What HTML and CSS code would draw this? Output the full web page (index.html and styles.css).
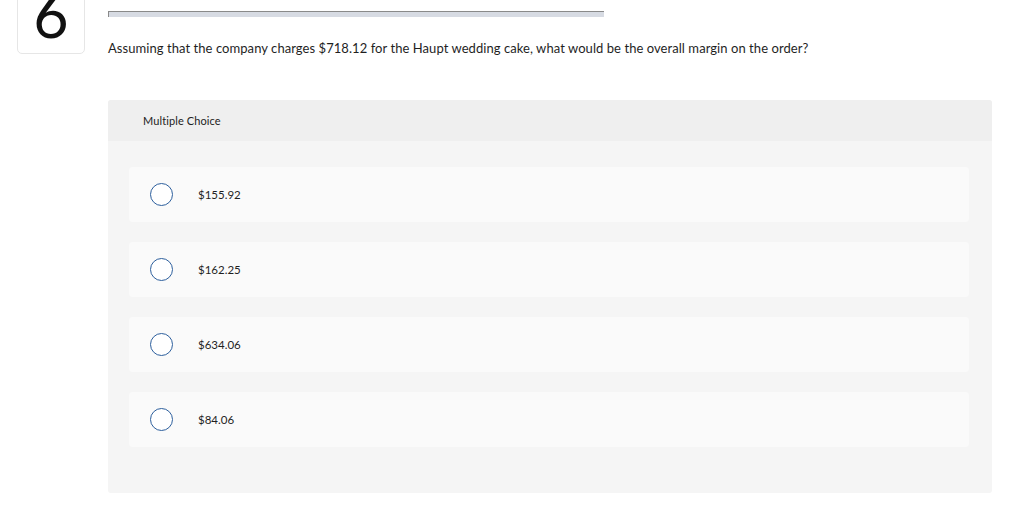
FILE: index.html
```html
<!DOCTYPE html>
<html>
<head>
<meta charset="utf-8">
<link rel="stylesheet" href="styles.css">
</head>
<body>
<div class="page">
  <div class="num-col">
    <div class="num-box">6</div>
  </div>
  <div class="main">
    <div class="bar"></div>
    <p class="question">Assuming that the company charges $718.12 for the Haupt wedding cake, what would be the overall margin on the order?</p>
    <div class="panel">
      <div class="panel-head">Multiple Choice</div>
      <div class="options">
        <div class="option"><span class="radio"></span><span class="label">$155.92</span></div>
        <div class="option"><span class="radio"></span><span class="label">$162.25</span></div>
        <div class="option"><span class="radio"></span><span class="label">$634.06</span></div>
        <div class="option"><span class="radio"></span><span class="label">$84.06</span></div>
      </div>
    </div>
  </div>
</div>
</body>
</html>
```
FILE: styles.css
```css
html, body {
  margin: 0;
  padding: 0;
  background: #ffffff;
}
body {
  font-family: "Lato", "Open Sans", sans-serif;
  color: #1f1f1f;
  overflow: hidden;
}
.page {
  display: flex;
  align-items: flex-start;
  padding-left: 17px;
  gap: 23px;
}
.num-col {
  width: 68px;
  flex: none;
}
.num-box {
  box-sizing: border-box;
  width: 68px;
  height: 80px;
  margin-top: -26px;
  border: 1px solid #e6e6e6;
  border-radius: 5px;
  display: flex;
  align-items: flex-end;
  justify-content: center;
  padding-bottom: 8px;
  font-family: "Lato", sans-serif;
  font-size: 61px;
  line-height: 1;
  color: #111;
}
.main {
  width: 884px;
  flex: none;
}
.bar {
  box-sizing: border-box;
  width: 496px;
  height: 6px;
  margin-top: 11px;
  background: #d7dbe3;
  border-top: 1px solid #8a8a8a;
  border-left: 1px solid #8a8a8a;
}
.question {
  margin: 0;
  margin-top: 23px;
  font-size: 13px;
  letter-spacing: 0.06px;
  line-height: 17px;
  color: #1f1f1f;
}
.panel {
  margin-top: 43px;
  background: #f5f5f5;
  border-radius: 3px;
  height: 393px;
  overflow: hidden;
}
.panel-head {
  height: 41px;
  background: #efefef;
  padding-left: 35px;
  display: flex;
  align-items: center;
  font-size: 11px;
  letter-spacing: 0.1px;
  color: #222;
}
.options {
  display: flex;
  flex-direction: column;
  gap: 20px;
  padding: 26px 23px 0 21px;
}
.option {
  height: 55px;
  background: #fafafa;
  border-radius: 4px;
  display: flex;
  align-items: center;
  padding-left: 21px;
}
.radio {
  box-sizing: border-box;
  width: 23px;
  height: 23px;
  border: 1px solid #2d5f9d;
  border-radius: 50%;
  background: #fff;
  flex: none;
}
.label {
  margin-left: 25px;
  font-size: 11.5px;
  color: #1f1f1f;
}
```
